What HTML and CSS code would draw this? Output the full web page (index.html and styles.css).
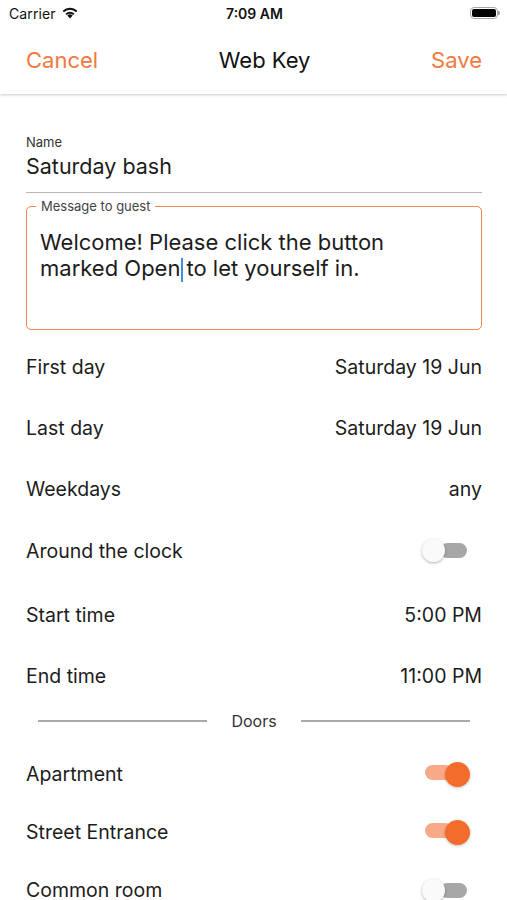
FILE: index.html
```html
<!DOCTYPE html>
<html>
<head>
<meta charset="utf-8">
<link rel="stylesheet" href="styles.css">
</head>
<body>
<div class="screen">
  <div class="status">
    <div class="status-left">
      <span class="carrier">Carrier</span>
      <svg class="wifi" width="18" height="13" viewBox="0 0 18 13">
        <path d="M9 12.5 L6.3 9.6 A3.9 3.9 0 0 1 11.7 9.6 Z" fill="#111"/>
        <path d="M4.4 7.7 A6.6 6.6 0 0 1 13.6 7.7 L12.3 9.1 A4.7 4.7 0 0 0 5.7 9.1 Z" fill="#111"/>
        <path d="M1.6 4.8 A10.6 10.6 0 0 1 16.4 4.8 L15.1 6.3 A8.6 8.6 0 0 0 2.9 6.3 Z" fill="#111"/>
      </svg>
    </div>
    <div class="status-time">7:09 AM</div>
    <div class="status-right">
      <div class="battery"><div class="battery-fill"></div></div>
      <div class="battery-nub"></div>
    </div>
  </div>

  <div class="nav">
    <span class="nav-btn">Cancel</span>
    <span class="nav-title">Web Key</span>
    <span class="nav-btn">Save</span>
  </div>

  <div class="form">
    <div class="field-name">
      <div class="field-label">Name</div>
      <div class="field-value">Saturday bash</div>
    </div>

    <div class="message">
      <span class="message-label">Message to guest</span>
      <div class="message-text">Welcome! Please click the button<br>marked Open<span class="cursor"></span>to let yourself in.</div>
    </div>

    <div class="rows">
      <div class="row"><span>First day</span><span>Saturday 19 Jun</span></div>
      <div class="row"><span>Last day</span><span>Saturday 19 Jun</span></div>
      <div class="row"><span>Weekdays</span><span>any</span></div>
      <div class="row row-toggle"><span>Around the clock</span><span class="switch off"><span class="track"></span><span class="thumb"></span></span></div>
      <div class="row"><span>Start time</span><span>5:00 PM</span></div>
      <div class="row"><span>End time</span><span>11:00 PM</span></div>
    </div>

    <div class="divider">
      <span class="divider-line"></span>
      <span class="divider-text">Doors</span>
      <span class="divider-line"></span>
    </div>

    <div class="doors">
      <div class="door"><span>Apartment</span><span class="switch on"><span class="track"></span><span class="thumb"></span></span></div>
      <div class="door"><span>Street Entrance</span><span class="switch on"><span class="track"></span><span class="thumb"></span></span></div>
      <div class="door"><span>Common room</span><span class="switch off"><span class="track"></span><span class="thumb"></span></span></div>
    </div>
  </div>
</div>
</body>
</html>
```

FILE: styles.css
```css
* { box-sizing: border-box; }
html, body { margin: 0; padding: 0; background: #fff; }
body {
  font-family: Inter, "Liberation Sans", sans-serif;
  color: #1c1c1c;
  width: 507px;
  height: 900px;
  overflow: hidden;
}
.screen { width: 507px; }

.status {
  height: 30px;
  display: grid;
  grid-template-columns: 1fr auto 1fr;
  align-items: center;
  padding: 0 7px 4px 9px;
  font-size: 14px;
}
.status-left { display: flex; align-items: center; gap: 5px; }
.carrier { color: #111; letter-spacing: 0.1px; }
.wifi { margin-top: -1px; }
.status-time { font-weight: 600; color: #111; }
.status-right { display: flex; align-items: center; justify-content: flex-end; }
.battery {
  width: 28px; height: 12px;
  border: 1.5px solid #a8a8a8;
  border-radius: 4px;
  padding: 1px;
}
.battery-fill { width: 100%; height: 100%; background: #000; border-radius: 2px; }
.battery-nub { width: 2px; height: 4px; background: #a8a8a8; border-radius: 0 1px 1px 0; }

.nav {
  height: 64px;
  display: flex;
  justify-content: space-between;
  align-items: center;
  padding: 0 25px 4px 26px;
  box-shadow: 0 1px 2px rgba(0,0,0,0.14), 0 2px 4px rgba(0,0,0,0.06);
  position: relative;
}
.nav-btn { color: #f3793e; font-size: 22px; }
.nav-title { font-size: 22px; color: #111; font-weight: 400; }

.form { padding: 0 25px 0 26px; }

.field-name {
  padding-top: 40px;
  border-bottom: 1px solid #b8b8b8;
  padding-bottom: 12px;
}
.field-label { font-size: 13px; color: #333; line-height: 16px; }
.field-value { font-size: 21.5px; line-height: 28px; margin-top: 2px; }

.message {
  margin-top: 13px;
  height: 124px;
  border: 1.5px solid #f2884f;
  border-radius: 5px;
  position: relative;
  padding: 22px 13px 0 13px;
}
.message-label {
  position: absolute;
  top: -9px;
  left: 9px;
  padding: 0 5px;
  background: #fff;
  font-size: 13px;
  color: #444;
  line-height: 16px;
}
.message-text { font-size: 22px; line-height: 26px; color: #1c1c1c; }
.cursor {
  display: inline-block;
  width: 2px;
  height: 24px;
  background: #3d8fe6;
  vertical-align: -6px;
  margin: 0 3px 0 1px;
}

.rows { margin-top: 6px; }
.row, .door {
  display: flex;
  justify-content: space-between;
  align-items: center;
  height: 61px;
  font-size: 19.5px;
}
.row-toggle { height: 65px; padding-bottom: 2px; }

.switch { position: relative; width: 60px; height: 30px; display: inline-block; }
.track {
  position: absolute;
  height: 15px;
  border-radius: 8px;
  top: 7.5px;
}
.thumb {
  position: absolute;
  width: 23px; height: 23px;
  border-radius: 50%;
  top: 3.5px;
}
.switch.off .track { left: 18px; width: 27px; background: #a7a7a7; }
.switch.off .thumb { left: 0; background: #fafafa; box-shadow: 0 1px 3px rgba(0,0,0,0.3); }
.switch.on .track { left: 3px; width: 28px; top: 5.5px; background: #f8aa88; }
.switch.on .thumb { left: 23px; width: 25px; height: 25px; top: 2.5px; background: #f36c2b; box-shadow: 0 1px 3px rgba(0,0,0,0.25); }

.divider {
  display: flex;
  align-items: center;
  height: 30px;
  padding: 0 12px;
  gap: 24px;
}
.divider-line { flex: 1; height: 2px; background: #a9a9a9; }
.divider-text { font-size: 16px; color: #333; }

.doors { padding-top: 9px; }
.door { height: 58px; }
```
